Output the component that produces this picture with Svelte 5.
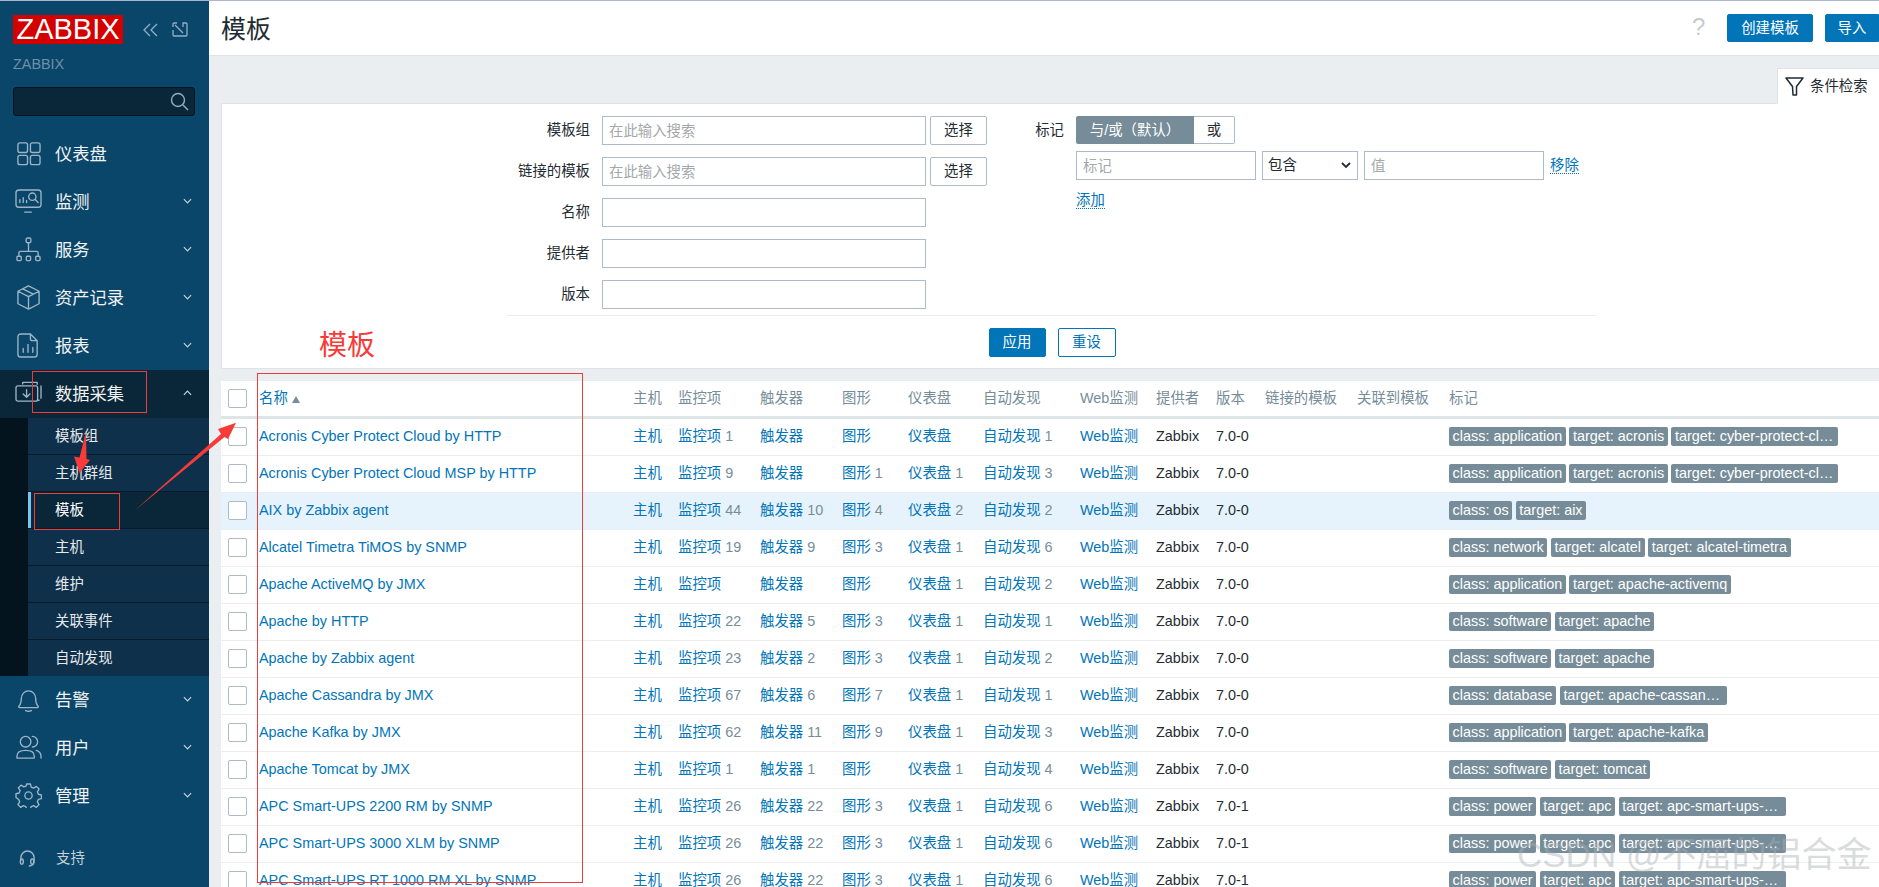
<script>
  const mainNav = [
    { id: 'dash', label: '仪表盘' },
    { id: 'mon', label: '监测', chev: true },
    { id: 'svc', label: '服务', chev: true },
    { id: 'inv', label: '资产记录', chev: true },
    { id: 'rep', label: '报表', chev: true },
  ];
  const sub = ['模板组', '主机群组', '模板', '主机', '维护', '关联事件', '自动发现'];
  const lowerNav = [
    { id: 'bell', label: '告警' },
    { id: 'users', label: '用户' },
    { id: 'gear', label: '管理' },
  ];
  const cols = ['主机', '监控项', '触发器', '图形', '仪表盘', '自动发现', 'Web监测', '提供者', '版本', '链接的模板', '关联到模板', '标记'];
  const widths = [32, 374, 45, 82, 82, 66, 75, 97, 76, 60, 49, 92, 92, 436];
  const cp = 'target: cyber-protect-cloud';
  const rows = [
    ['Acronis Cyber Protect Cloud by HTTP', '1', '', '', '', '1', '7.0-0', ['class: application', 'target: acronis', cp]],
    ['Acronis Cyber Protect Cloud MSP by HTTP', '9', '', '1', '1', '3', '7.0-0', ['class: application', 'target: acronis', cp]],
    ['AIX by Zabbix agent', '44', '10', '4', '2', '2', '7.0-0', ['class: os', 'target: aix'], true],
    ['Alcatel Timetra TiMOS by SNMP', '19', '9', '3', '1', '6', '7.0-0', ['class: network', 'target: alcatel', 'target: alcatel-timetra']],
    ['Apache ActiveMQ by JMX', '', '', '', '1', '2', '7.0-0', ['class: application', 'target: apache-activemq']],
    ['Apache by HTTP', '22', '5', '3', '1', '1', '7.0-0', ['class: software', 'target: apache']],
    ['Apache by Zabbix agent', '23', '2', '3', '1', '2', '7.0-0', ['class: software', 'target: apache']],
    ['Apache Cassandra by JMX', '67', '6', '7', '1', '1', '7.0-0', ['class: database', 'target: apache-cassandra']],
    ['Apache Kafka by JMX', '62', '11', '9', '1', '3', '7.0-0', ['class: application', 'target: apache-kafka']],
    ['Apache Tomcat by JMX', '1', '1', '', '1', '4', '7.0-0', ['class: software', 'target: tomcat']],
    ['APC Smart-UPS 2200 RM by SNMP', '26', '22', '3', '1', '6', '7.0-1', ['class: power', 'target: apc', 'target: apc-smart-ups-2200-rm']],
    ['APC Smart-UPS 3000 XLM by SNMP', '26', '22', '3', '1', '6', '7.0-1', ['class: power', 'target: apc', 'target: apc-smart-ups-3000-xlm']],
    ['APC Smart-UPS RT 1000 RM XL by SNMP', '26', '22', '3', '1', '6', '7.0-1', ['class: power', 'target: apc', 'target: apc-smart-ups-rt-1000']],
  ];
  const formRows = [
    { label: '模板组', ph: '在此输入搜索', btn: true },
    { label: '链接的模板', ph: '在此输入搜索', btn: true },
    { label: '名称' },
    { label: '提供者' },
    { label: '版本' },
  ];
</script>

{#snippet navIcon(id)}
  <svg class="nav-icon" viewBox="0 0 28 26" fill="none" stroke="currentColor" stroke-width="1.4" stroke-linecap="round" stroke-linejoin="round">
    {#if id === 'dash'}
      <rect x="3" y="2" width="10" height="10" rx="2" /><rect x="16" y="2" width="10" height="10" rx="2" /><rect x="3" y="15" width="10" height="9.5" rx="2" /><rect x="16" y="15" width="10" height="9.5" rx="2" />
    {:else if id === 'mon'}
      <rect x="1" y="1" width="26" height="18" rx="3" /><path d="M10 24h7M5 14v-3M8.500 14v-5M12 14v-2" /><circle cx="18" cy="8" r="3.800" /><path d="M21 11l3 3" />
    {:else if id === 'svc'}
      <rect x="11.500" y="1" width="5" height="5" rx="1.500" /><path d="M14 6v9M4 19v-2.500a1.500 1.500 0 0 1 1.500-1.500h17a1.500 1.500 0 0 1 1.500 1.500V19" /><rect x="2" y="20" width="4.500" height="4.500" rx="1" /><rect x="11.700" y="20" width="4.500" height="4.500" rx="1" /><rect x="21.500" y="20" width="4.500" height="4.500" rx="1" />
    {:else if id === 'inv'}
      <path d="M14 1l11 5.500v13L14 25 3 19.500v-13zM3 6.500l11 5.500 11-5.500M14 12v13M8 4l11 5.500" />
    {:else if id === 'rep'}
      <path d="M6 1h10l7 7v14a3 3 0 0 1-3 3H6a3 3 0 0 1-3-3V4a3 3 0 0 1 3-3zM16 1v5a2 2 0 0 0 2 2h5M8.500 20v-4M13.500 20v-8M18.500 20v-5" />
    {:else if id === 'data'}
      <path d="M23 3.500V1.500H8v1.500M27 18V5M25 20h-1" /><rect x="1" y="5" width="22.500" height="16" rx="2" /><path d="M12 9v8M8.500 13.500L12 17l3.500-3.500" />
    {:else if id === 'bell'}
      <path d="M4 20c2-2 2.500-4 2.500-8a7.500 8 0 0 1 15 0c0 4 .5 6 2.500 8 .5.800 0 1.500-1 1.500H5c-1 0-1.500-.7-1-1.500zM11 24.500c2 1 4 1 6 0" />
    {:else if id === 'users'}
      <circle cx="11" cy="7" r="5.500" /><path d="M2 24v-2c0-4 3.500-6 9-6s9 2 9 6v2zM18 1.500a5.500 5.500 0 0 1 0 11M22 16c3 1 5 3 5 6v2" />
    {:else if id === 'gear'}
      <circle cx="14" cy="13" r="3.800" /><path d="M12 1h4l.8 3.300 2.500 1 2.900-1.800 2.800 2.800-1.800 2.900 1 2.500 3.300.8v3.800l-3.300.8-1 2.500 1.800 2.900-2.800 2.800-2.900-1.800-2.500 1-.8 2.300h-4l-.8-2.300-2.500-1-2.900 1.800-2.800-2.800 1.800-2.900-1-2.500L1 15v-3.800l3.300-.8 1-2.500-1.800-2.900 2.800-2.800 2.900 1.800 2.500-1z" />
    {/if}
  </svg>
{/snippet}

{#snippet chev(up)}
  <svg class="chev" viewBox="0 0 10 6" fill="none" stroke="currentColor" stroke-width="1.300">
    <path d={up ? 'M1 5l4-4 4 4' : 'M1 1l4 4 4-4'} />
  </svg>
{/snippet}

{#snippet count(label, n)}
  <a class="link" href="#top">{label}</a>{#if n}<span class="num">{n}</span>{/if}
{/snippet}

<div class="app">
  <aside class="side">
    <div class="brand">
      <div class="logo">ZABBIX</div>
      <svg class="collapse" viewBox="0 0 16 14" fill="none" stroke="currentColor" stroke-width="1.300"><path d="M7 1L1 7l6 6M14 1L8 7l6 6" /></svg>
      <svg class="kiosk" viewBox="0 0 16 15" fill="none" stroke="currentColor" stroke-width="1.300"><path d="M5 1H2a1 1 0 0 0-1 1v3M3 3l8 8M11 5V1h3a1 1 0 0 1 1 1v11a1 1 0 0 1-1 1H2a1 1 0 0 1-1-1V8" /></svg>
    </div>
    <div class="server">ZABBIX</div>
    <div class="search">
      <svg viewBox="0 0 19 19" fill="none" stroke="currentColor" stroke-width="1.400"><circle cx="8" cy="8" r="6.500" /><path d="M13 13l5 5" /></svg>
    </div>
    <nav class="nav">
      {#each mainNav as item}
        <div class="nav-item">
          {@render navIcon(item.id)}<span class="nav-label">{item.label}</span>
          {#if item.chev}{@render chev(false)}{/if}
        </div>
      {/each}
      <div class="nav-item open">
        {@render navIcon('data')}<span class="nav-label">数据采集</span>{@render chev(true)}
      </div>
      <ul class="submenu">
        {#each sub as s}
          <li class:active={s === '模板'}>{s}</li>
        {/each}
      </ul>
      {#each lowerNav as item}
        <div class="nav-item">
          {@render navIcon(item.id)}<span class="nav-label">{item.label}</span>{@render chev(false)}
        </div>
      {/each}
    </nav>
    <div class="support">
      <svg viewBox="0 0 18 18" fill="none" stroke="currentColor" stroke-width="1.500" stroke-linecap="round"><path d="M2 11V8a7 7 0 0 1 14 0v3M16 12c0 2.500-1.500 4.500-5 5" /><rect x="1.500" y="9.500" width="3" height="5.500" rx="1.500" /><rect x="12.500" y="9.500" width="3" height="5.500" rx="1.500" /></svg>
      <span>支持</span>
    </div>
  </aside>

  <main class="main">
    <header class="top">
      <h1>模板</h1>
      <div class="top-actions">
        <span class="help">?</span>
        <button class="primary create">创建模板</button>
        <button class="primary import">导入</button>
      </div>
    </header>

    <div class="tab-row">
      <div class="tab">
        <svg viewBox="0 0 19 19" fill="none" stroke="currentColor" stroke-width="1.500" stroke-linejoin="round"><path d="M1 1h17l-6.500 8.500V18h-3.500l-.5-8.500z" /></svg>
        <span>条件检索</span>
      </div>
    </div>

    <section class="filter">
      <div class="filter-cols">
        <div class="form-left">
          {#each formRows as r}
            <label class="f-label" for={r.label}>{r.label}</label>
            <input id={r.label} class="field" placeholder={r.ph ?? ''} />
            {#if r.btn}<button class="pick">选择</button>{:else}<span></span>{/if}
          {/each}
        </div>
        <div class="form-right">
          <span class="f-label">标记</span>
          <div class="tag-panel">
            <div class="radio"><span class="on">与/或（默认）</span><span class="off">或</span></div>
            <div class="tag-row">
              <input class="field tag-name" placeholder="标记" />
              <div class="field select">包含<svg viewBox="0 0 10 7" fill="none" stroke="#1f2c33" stroke-width="1.800"><path d="M1 1l4 4 4-4" /></svg></div>
              <input class="field tag-val" placeholder="值" />
              <a class="dotted" href="#top">移除</a>
            </div>
            <a class="dotted add" href="#top">添加</a>
          </div>
        </div>
      </div>
      <div class="divider"></div>
      <div class="actions">
        <button class="primary apply">应用</button>
        <button class="reset">重设</button>
      </div>
    </section>

    <table class="list">
      <colgroup>
        {#each widths as w}<col style="width:{w}px" />{/each}
      </colgroup>
      <thead>
        <tr>
          <th class="check"><span class="cb"></span></th>
          <th class="sort"><a class="link" href="#top">名称</a><i class="asc"></i></th>
          {#each cols as c}<th>{c}</th>{/each}
        </tr>
      </thead>
      <tbody>
        {#each rows as r}
          <tr class:hover={r[8]}>
            <td class="check"><span class="cb"></span></td>
            <td><a class="link" href="#top">{r[0]}</a></td>
            <td><a class="link" href="#top">主机</a></td>
            <td>{@render count('监控项', r[1])}</td>
            <td>{@render count('触发器', r[2])}</td>
            <td>{@render count('图形', r[3])}</td>
            <td>{@render count('仪表盘', r[4])}</td>
            <td>{@render count('自动发现', r[5])}</td>
            <td><a class="link" href="#top">Web监测</a></td>
            <td>Zabbix</td>
            <td>{r[6]}</td>
            <td></td>
            <td></td>
            <td><div class="tags">{#each r[7] as t}<span class="tag">{t}</span>{/each}</div></td>
          </tr>
        {/each}
      </tbody>
    </table>
  </main>

  <!-- hand-drawn screenshot annotations -->
  <div class="note box-a"></div>
  <div class="note box-b"></div>
  <div class="note box-c"></div>
  <div class="note-text">模板</div>
  <svg class="arrows" viewBox="0 0 1879 887" fill="#f63b38">
    <path d="M134 511L221 434L218 429L236 422.700L228 439L224.500 437z" />
    <path d="M86 432L86.500 459L90 460L79.500 473L74 456.500L79.500 457.500z" />
  </svg>
  <div class="watermark">CSDN @不屈的铝合金</div>
</div>

<style>
  :global(body) { margin: 0; overflow: hidden; background: #ebeef0; }
  * { box-sizing: border-box; }
  .app {
    position: relative; display: flex; width: 1879px; height: 887px; overflow: hidden;
    border-top: 1px solid #a9b6cc;
    font: 14.4px/17px "Liberation Sans", "Noto Sans CJK SC", sans-serif; color: #1f2c33;
  }
  .side { flex: 0 0 209px; background: #0a466a; color: #f2f2f2; display: flex; flex-direction: column; }
  .brand { display: flex; align-items: center; padding: 14px 0 0 13px; height: 43px; color: #8fb0c6; }
  .logo { width: 110px; height: 29px; background: #d40000; color: #fff; font-size: 29px; line-height: 29px; text-align: center; }
  .collapse { width: 16px; height: 14px; margin-left: 20px; }
  .kiosk { width: 16px; height: 15px; margin-left: 13px; }
  .server { margin: 12px 0 0 13px; height: 17px; line-height: 17px; color: #6a91a9; }
  .search { margin: 14px 0 0 13px; width: 182px; height: 29px; background: #0a2639; border: 1px solid #051520; border-radius: 3px; color: #8fb0c6; position: relative; }
  .search svg { position: absolute; right: 5px; top: 4px; width: 19px; height: 19px; }
  .nav { margin-top: 14px; }
  .nav-item { display: flex; align-items: center; height: 48px; padding-left: 15px; color: #9db5c6; }
  .nav-label { margin-left: 13px; font-size: 17.3px; line-height: 20px; color: #f0f2f3; flex: 1; }
  .nav-icon { width: 27px; height: 25px; flex: none; margin-bottom: 2px; }
  .chev { width: 9px; height: 6px; margin-right: 17px; margin-bottom: 2px; color: #c8d4dc; flex: none; }
  .open { background: #0a2639; }
  .submenu { list-style: none; margin: 0; padding: 0 0 0 28px; background: #03141e; }
  .submenu li { height: 37px; line-height: 36px; padding-left: 27px; background: #0f304a; border-bottom: 1px solid #071c2b; color: #e6eaed; }
  .submenu li:last-child { border-bottom: 0; height: 36px; }
  .submenu li.active { background: #0a2639; color: #fff; box-shadow: inset 3px 0 0 #7ec3f0; }
  .support { display: flex; align-items: center; margin-top: 30px; padding-left: 19px; color: #9db5c6; }
  .support svg { width: 17px; height: 17px; }
  .support span { margin-left: 20px; color: #c4d0d8; }

  .main { flex: 1; min-width: 0; }
  .top { display: flex; align-items: center; justify-content: space-between; height: 55px; background: #fff; border-bottom: 1px solid #dfe4e7; padding: 0 0 0 12px; }
  h1 { margin: 2px 0 0; font-size: 25px; font-weight: 400; line-height: 1; }
  .top-actions { display: flex; align-items: center; }
  .help { font-size: 24px; line-height: 28px; color: #c3ccd1; width: 35px; margin-top: -2px; }
  button { font: inherit; cursor: pointer; border-radius: 2px; }
  .primary { background: #0275b8; color: #fff; border: 1px solid #0275b8; height: 28px; padding: 0; }
  .create { width: 86px; margin-right: 12px; }
  .import { width: 54px; border-radius: 2px 0 0 2px; }

  .tab-row { display: flex; justify-content: flex-end; padding-top: 12px; }
  .tab { width: 102px; height: 36px; background: #fff; border: 1px solid #dfe4e7; border-width: 1px 0 0 1px; display: flex; align-items: center; padding: 0 0 0 7px; position: relative; z-index: 1; margin-bottom: -1px; }
  .tab svg { width: 19px; height: 19px; margin-right: 6px; }

  .filter { margin-left: 12px; height: 266px; background: #fff; border: 1px solid #dfe4e7; border-right: 0; padding-top: 12px; }
  .filter-cols { display: flex; padding-left: 284px; }
  .form-left { display: grid; grid-template-columns: 84px 336px 61px; grid-auto-rows: 29px; row-gap: 12px; align-items: center; }
  .f-label { text-align: right; }
  .field { height: 29px; border: 1px solid #acbbc7; background: #fff; border-radius: 0; font: inherit; padding: 0 6px; outline: none; color: #1f2c33; }
  .field::placeholder { color: #a3a8ab; opacity: 1; }
  .form-left .field { margin-left: 12px; width: 324px; }
  .pick { width: 57px; height: 29px; margin-left: 4px; background: #fff; border: 1px solid #acbbc7; color: #1f2c33; }
  .form-right { display: flex; margin-left: 48px; }
  .form-right .f-label { width: 29px; margin-top: 6px; }
  .tag-panel { margin-left: 12px; }
  .radio { display: flex; height: 28px; line-height: 28px; }
  .radio .on { width: 118px; background: #768d99; color: #fff; text-align: center; border-radius: 2px 0 0 2px; }
  .radio .off { width: 41px; text-align: center; border: 1px solid #acbbc7; border-left: 0; border-radius: 0 2px 2px 0; line-height: 26px; }
  .tag-row { display: flex; align-items: center; margin-top: 7px; }
  .tag-name { width: 180px; }
  .select { width: 96px; margin-left: 6px; display: flex; align-items: center; justify-content: space-between; padding-right: 6px; padding-left: 5px; }
  .select svg { width: 10px; height: 7px; }
  .tag-val { width: 180px; margin-left: 6px; }
  .dotted { color: #0275b8; text-decoration: none; border-bottom: 1px dotted #0275b8; line-height: 16px; }
  .tag-row .dotted { margin-left: 6px; }
  .add { display: inline-block; margin-top: 12px; }
  .divider { height: 1px; background: #ebeef0; margin: 6px 283px 0 284px; }
  .actions { display: flex; justify-content: center; gap: 12px; margin-top: 12px; padding-left: 3px; }
  .apply { width: 57px; height: 29px; }
  .reset { width: 58px; height: 29px; background: #fff; border: 1px solid #0275b8; color: #0275b8; }

  .list { margin: 11px 0 0 12px; width: 1658px; table-layout: fixed; border-collapse: separate; border-spacing: 0; background: #fff; }
  .list th { height: 39px; padding: 0 6px; font-weight: 400; text-align: left; color: #768d99; border-top: 1px solid #ebeef0; border-bottom: 3px solid #dfe4e7; white-space: nowrap; }
  .list td { height: 37px; padding: 0 6px 2px; border-bottom: 1px solid #ebeef0; white-space: nowrap; overflow: hidden; }
  .list .check { padding-left: 7px; }
  .hover td { background: #e6f3fd; }
  .link { color: #0275b8; text-decoration: none; }
  .num { color: #768d99; margin-left: 4px; }
  .cb { display: block; width: 19px; height: 19px; background: #fff; border: 1px solid #acbbc7; border-radius: 2px; }
  .asc { display: inline-block; margin-left: 4px; border: 4px solid transparent; border-top: 0; border-bottom: 7px solid #768d99; }
  .tags { display: flex; gap: 3.600px; }
  .tag { height: 19px; line-height: 19px; padding: 0 3.600px; background: #768d99; color: #fff; border-radius: 2px; max-width: 167px; overflow: hidden; text-overflow: ellipsis; white-space: nowrap; flex: none; }

  .note { position: absolute; border: 1px solid #ef3b3b; pointer-events: none; }
  .box-a { left: 32px; top: 370px; width: 115px; height: 42px; }
  .box-b { left: 34px; top: 492px; width: 86px; height: 37px; }
  .box-c { left: 257px; top: 372px; width: 326px; height: 510px; }
  .note-text { position: absolute; left: 319px; top: 325px; font-size: 28px; line-height: 40px; color: #f63b38; }
  .arrows { position: absolute; left: 0; top: -1px; width: 1879px; height: 887px; pointer-events: none; }
  .watermark { position: absolute; left: 1517px; top: 834px; font-size: 35px; line-height: 40px; white-space: nowrap; color: rgba(170, 175, 178, .45); }
</style>
